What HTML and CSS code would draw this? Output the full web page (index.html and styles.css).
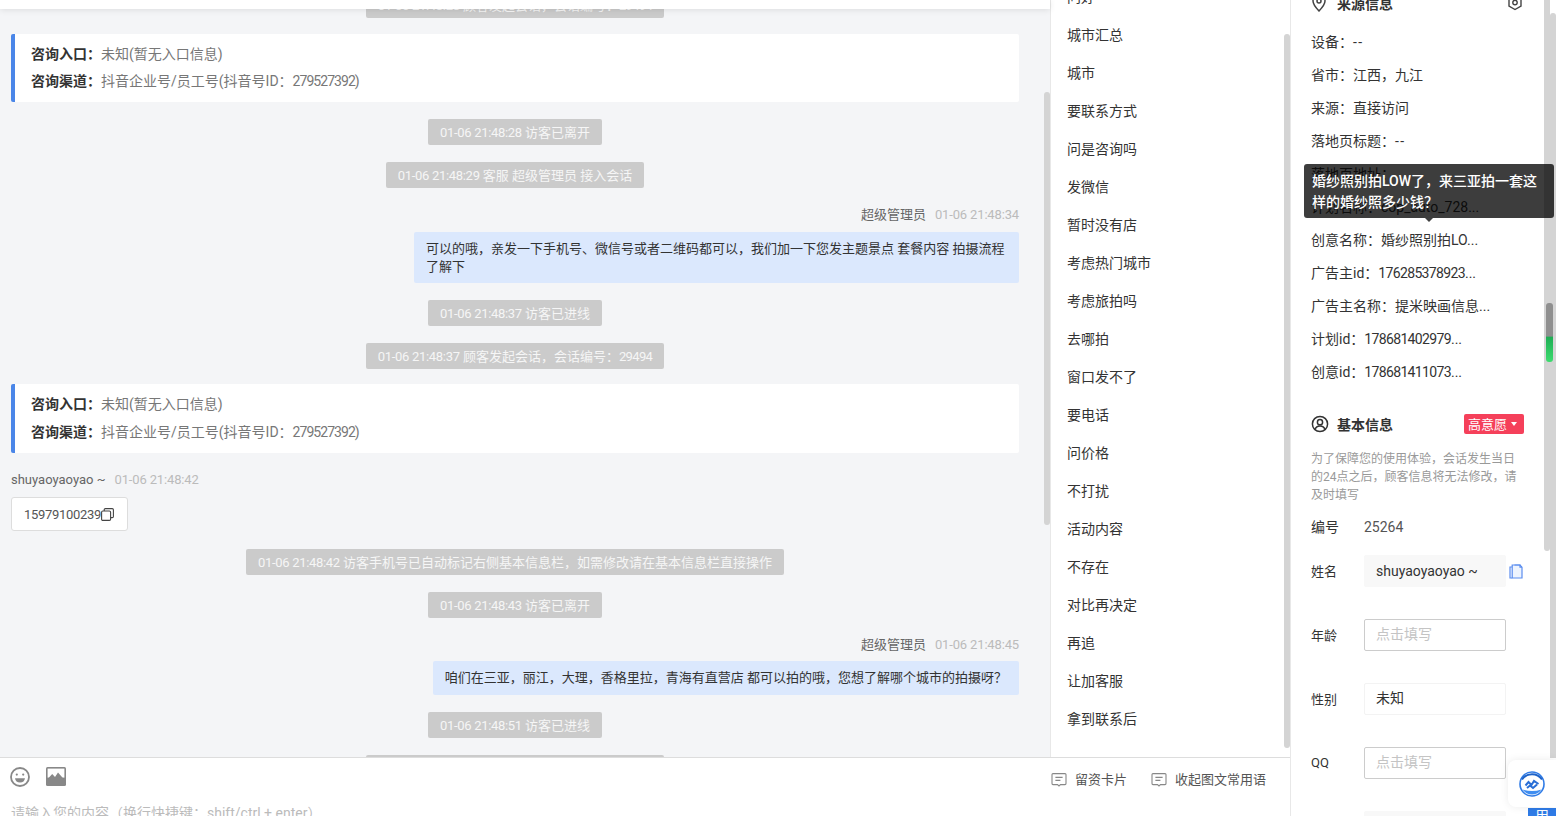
FILE: index.html
```html
<!DOCTYPE html>
<html lang="zh-CN">

<head>
  <meta charset="UTF-8" />
  <title>会话详情</title>
  <link rel="stylesheet" href="styles.css">
</head>

<body>
  <div class="main">
    <div class="top">
      <!-- chat column -->
      <div class="chat">
        <div class="chat-head"></div>
        <div class="chat-body">
          <div class="chat-list">
            <div class="pill"><span class="stamp">01-06 21:48:28</span> 顾客发起会话，会话编号：<span class="num">29494</span></div>
            <div class="entry">
              <p><b>咨询入口：</b>未知(暂无入口信息)</p>
              <p><b>咨询渠道：</b>抖音企业号/员工号(抖音号ID：<span class="num">279527392</span>)</p>
            </div>
            <div class="pill"><span class="stamp">01-06 21:48:28</span> 访客已离开</div>
            <div class="pill"><span class="stamp">01-06 21:48:29</span> 客服 超级管理员 接入会话</div>
            <div class="msg msg-right">
              <div class="msg-name">超级管理员<span class="msg-time">01-06 21:48:34</span></div>
              <div class="bubble">可以的哦，亲发一下手机号、微信号或者二维码都可以，我们加一下您发主题景点 套餐内容 拍摄流程了解下</div>
            </div>
            <div class="pill"><span class="stamp">01-06 21:48:37</span> 访客已进线</div>
            <div class="pill"><span class="stamp">01-06 21:48:37</span> 顾客发起会话，会话编号：<span class="num">29494</span></div>
            <div class="entry entry-tall">
              <p><b>咨询入口：</b>未知(暂无入口信息)</p>
              <p><b>咨询渠道：</b>抖音企业号/员工号(抖音号ID：<span class="num">279527392</span>)</p>
            </div>
            <div class="msg msg-phone">
              <div class="msg-name">shuyaoyaoyao ~<span class="msg-time">01-06 21:48:42</span></div>
              <div class="phone"><span class="stamp">15979100239</span>
                <svg class="phone-copy" width="13" height="13" viewBox="0 0 13 13" fill="none" stroke="#444" stroke-width="1.1">
                  <rect x="0.6" y="3" width="9" height="9.4" rx="1.2" />
                  <path d="M3.2 3V1.8q0-1.2 1.2-1.2h6.8q1.2 0 1.2 1.2v6.6q0 1.2-1.2 1.2H9.6" />
                </svg>
              </div>
            </div>
            <div class="pill"><span class="stamp">01-06 21:48:42</span> 访客手机号已自动标记右侧基本信息栏，如需修改请在基本信息栏直接操作</div>
            <div class="pill"><span class="stamp">01-06 21:48:43</span> 访客已离开</div>
            <div class="msg msg-right msg-tight">
              <div class="msg-name">超级管理员<span class="msg-time">01-06 21:48:45</span></div>
              <div class="bubble">咱们在三亚，丽江，大理，香格里拉，青海有直营店 都可以拍的哦，您想了解哪个城市的拍摄呀？</div>
            </div>
            <div class="pill"><span class="stamp">01-06 21:48:51</span> 访客已进线</div>
            <div class="pill"><span class="stamp">01-06 21:48:51</span> 顾客发起会话，会话编号：<span class="num">29495</span></div>
          </div>
          <div class="bar bar-chat"></div>
        </div>
      </div>

      <!-- common phrases -->
      <div class="phrases">
        <ul class="phrase-list">
          <li>问好</li>
          <li>城市汇总</li>
          <li>城市</li>
          <li>要联系方式</li>
          <li>问是咨询吗</li>
          <li>发微信</li>
          <li>暂时没有店</li>
          <li>考虑热门城市</li>
          <li>考虑旅拍吗</li>
          <li>去哪拍</li>
          <li>窗口发不了</li>
          <li>要电话</li>
          <li>问价格</li>
          <li>不打扰</li>
          <li>活动内容</li>
          <li>不存在</li>
          <li>对比再决定</li>
          <li>再追</li>
          <li>让加客服</li>
          <li>拿到联系后</li>
        </ul>
        <div class="bar bar-phrases"></div>
      </div>
    </div>

    <!-- input area -->
    <div class="composer">
      <div class="tools">
        <div class="tool-left">
          <svg width="20" height="20" viewBox="0 0 20 20" fill="none" stroke="#888" stroke-width="1.8">
            <circle cx="10" cy="10" r="9" />
            <circle cx="6.8" cy="7.6" r="1.1" fill="#888" stroke="none" />
            <circle cx="13.2" cy="7.6" r="1.1" fill="#888" stroke="none" />
            <path d="M5 11.2h10q-.6 4.2-5 4.2t-5-4.2z" fill="#888" stroke="none" />
          </svg>
          <svg width="20" height="20" viewBox="0 0 20 20">
            <rect x="0" y="0" width="20" height="19" rx="1.5" fill="#888" />
            <rect x="1.6" y="1.6" width="16.8" height="9" fill="#fff" />
            <path d="M1.6 12l4.6-5 2.800 3 3-4.600 6.400 7.400v3H1.600z" fill="#888" />
          </svg>
        </div>
        <div class="tool-right">
          <span class="tool-link">
            <svg width="16" height="16" viewBox="0 0 16 16" fill="none" stroke="#888" stroke-width="1.1">
              <path d="M2 1.600h12q1 0 1 1v9q0 1-1 1H9.500L8 14l-1.500-1.400H2q-1 0-1-1v-9q0-1 1-1z" />
              <path d="M4.400 5.400h7.200M4.400 8.400h5" />
            </svg>留资卡片</span>
          <span class="tool-link">
            <svg width="16" height="16" viewBox="0 0 16 16" fill="none" stroke="#888" stroke-width="1.1">
              <path d="M2 1.600h12q1 0 1 1v9q0 1-1 1H9.500L8 14l-1.500-1.400H2q-1 0-1-1v-9q0-1 1-1z" />
              <path d="M4.400 5.400h7.200M4.400 8.400h5" />
            </svg>收起图文常用语</span>
        </div>
      </div>
      <div class="placeholder">请输入您的内容（换行快捷键：shift/ctrl + enter）</div>
    </div>
  </div>

  <!-- right info panel -->
  <div class="info">
    <div class="info-inner">
      <div class="info-title">
        <span class="title-text">
          <svg class="pin" width="16" height="18" viewBox="0 0 16 18" fill="none" stroke="#444" stroke-width="1.5">
            <path d="M8 17C4 12.800 2 10 2 7a6 6 0 0 1 12 0c0 3-2 5.800-6 10z" />
            <circle cx="8" cy="7" r="2" />
          </svg>来源信息</span>
        <svg class="gear" width="16" height="18" viewBox="0 0 16 18" fill="none" stroke="#444" stroke-width="1.4">
          <path d="M8 1.500l6 3.500v7l-6 3.500-6-3.500v-7z" />
          <circle cx="8" cy="8.500" r="2.200" />
        </svg>
      </div>
      <div class="source">
        <div>设备：<span class="dash">--</span></div>
        <div>省市：江西，九江</div>
        <div>来源：直接访问</div>
        <div>落地页标题：<span class="dash">--</span></div>
        <div>落地页地址：</div>
        <div>计划名称：cop_auto_728...</div>
        <div>创意名称：婚纱照别拍LO...</div>
        <div>广告主id：<span class="num">176285378923</span>...</div>
        <div>广告主名称：提米映画信息...</div>
        <div>计划id：<span class="num">178681402979</span>...</div>
        <div>创意id：<span class="num">178681411073</span>...</div>
      </div>
      <div class="info-title info-title-basic">
        <span class="title-text">
          <svg width="18" height="18" viewBox="0 0 18 18" fill="none" stroke="#333" stroke-width="1.5">
            <circle cx="9" cy="9" r="7.600" />
            <circle cx="9" cy="7.200" r="2.600" />
            <path d="M4 14.500c.8-2.400 2.600-3.500 5-3.500s4.200 1.100 5 3.500" />
          </svg>基本信息</span>
        <span class="tag">高意愿<i class="tag-caret"></i></span>
      </div>
      <p class="note">为了保障您的使用体验，会话发生当日的24点之后，顾客信息将无法修改，请及时填写</p>
      <div class="serial"><span>编号</span><span>25264</span></div>
      <div class="field">
        <label>姓名</label>
        <div class="box box-fill">shuyaoyaoyao ~</div>
        <svg class="field-copy" width="14" height="15" viewBox="0 0 14 15" fill="none" stroke="#5b8def" stroke-width="1.2">
          <path d="M3.200 1H11l2 2.200V14H3.200z" fill="#eef4fe" />
          <path d="M3.200 3H1v11h2.200" />
          <path d="M5.500 1h5.500v2.200h2" />
        </svg>
      </div>
      <div class="field">
        <label>年龄</label>
        <div class="box box-input">点击填写</div>
      </div>
      <div class="field">
        <label>性别</label>
        <div class="box box-plain">未知</div>
      </div>
      <div class="field">
        <label>QQ</label>
        <div class="box box-input">点击填写</div>
      </div>
      <div class="field">
        <label>微信</label>
        <div class="box box-fill"></div>
      </div>
    </div>

    <div class="bar bar-info-a"></div>
    <div class="bar bar-info-b"></div>
    <div class="bar-green"></div>

    <div class="tip">婚纱照别拍LOW了，来三亚拍一套这样的婚纱照多少钱？</div>

    <div class="use-btn">用</div>
    <div class="float-logo">
      <svg width="26" height="26" viewBox="0 0 26 26">
        <circle cx="13" cy="13" r="12" fill="#fff" stroke="#2f7be6" stroke-width="1.6" />
        <path d="M3 8.500A12 12 0 0 1 23 8.500 12 12 0 0 0 3 8.500z" fill="#1d62c8" stroke="#1d62c8" stroke-width="2" />
        <path d="M3.500 18.500a11.500 11.500 0 0 0 19 0q-9.500 3-19 0z" fill="#3f8df0" />
        <path d="M6.500 14.500l3-3.500 3 3 2.500-4 4.500 3M8 17l3-2.500 3 2.500 4-3.500" fill="none" stroke="#2a6fd6" stroke-width="2" />
      </svg>
    </div>
  </div>
</body>

</html>
```

FILE: styles.css
```css
* {
  box-sizing: border-box;
}

body {
  margin: 0;
  width: 1556px;
  height: 816px;
  overflow: hidden;
  display: flex;
  background: #fff;
  color: #333;
  font-family: Roboto, "Noto Sans CJK SC", sans-serif;
  font-size: 13px;
}

p {
  margin: 0;
}

/* digits run narrower in the original, tighten them */
.num {
  letter-spacing: -0.65px;
}

.stamp {
  letter-spacing: -0.3px;
}

.dash {
  letter-spacing: 1.5px;
}

.main {
  width: 1290px;
  flex: none;
  display: flex;
  flex-direction: column;
}

.top {
  height: 758px;
  flex: none;
  display: flex;
  border-bottom: 1px solid #ddd;
}

/* chat */
.chat {
  width: 1050px;
  flex: none;
  display: flex;
  flex-direction: column;
  background: #f4f5f7;
}

.chat-head {
  height: 9px;
  flex: none;
  background: #fff;
  box-shadow: 0 1px 6px rgba(0, 0, 0, 0.1);
  position: relative;
  z-index: 1;
}

.chat-body {
  flex: 1;
  position: relative;
  overflow: hidden;
}

.chat-list {
  margin-top: -17px;
  padding: 0 31px 0 11px;
  display: flex;
  flex-direction: column;
  align-items: center;
}

.pill {
  height: 26px;
  line-height: 26px;
  padding: 1px 12px 0;
  margin-bottom: 17px;
  background: #cbcbcb;
  color: #f6f6f6;
  border-radius: 2px;
  white-space: nowrap;
}

.entry {
  align-self: stretch;
  height: 68px;
  margin: -1px 0 17px;
  padding: 7px 16px 0;
  background: #fff;
  border-left: 4px solid #4a86e8;
  border-radius: 2px;
  color: #777;
  font-size: 14px;
  line-height: 27px;
}

.entry-tall {
  height: 69px;
  margin-top: -2px;
  line-height: 27.500px;
}

.entry b {
  color: #333;
}

.entry .num {
  letter-spacing: -0.95px;
}

.msg {
  align-self: stretch;
  margin-top: 2px;
  margin-bottom: 17px;
}

.msg-right {
  display: flex;
  flex-direction: column;
  align-items: flex-end;
}

.msg-name {
  height: 16px;
  line-height: 16px;
  margin-bottom: 9px;
  color: #666;
}

.msg-tight .msg-name {
  margin-bottom: 8px;
}

.msg-time {
  margin-left: 9px;
  color: #bbb;
  letter-spacing: -0.15px;
}

.bubble {
  max-width: 605px;
  padding: 8px 12px 7px;
  background: #dbe8fd;
  border-radius: 2px;
  line-height: 18px;
}

.msg-tight .bubble {
  padding-bottom: 8px;
}

.msg-phone {
  margin-bottom: 18px;
}

.phone {
  display: inline-flex;
  align-items: center;
  width: 117px;
  height: 34px;
  padding: 0 12px;
  background: #fff;
  border: 1px solid #ddd;
  border-radius: 3px;
  color: #555;
}

.phone-copy {
  flex: none;
}

/* phrases */
.phrases {
  flex: 1;
  position: relative;
  overflow: hidden;
  border-left: 1px solid #e8e8e8;
  font-size: 14px;
}

.phrase-list {
  list-style: none;
  margin: -22px 0 0;
  padding: 0 0 0 16px;
}

.phrase-list li {
  height: 38px;
  line-height: 38px;
}

/* scrollbars */
.bar {
  position: absolute;
  width: 6px;
  background: #d4d4d4;
  border-radius: 3px;
}

.bar-chat {
  right: 0;
  top: 83px;
  height: 433px;
}

.bar-phrases {
  right: 0;
  top: 34px;
  height: 714px;
}

/* composer */
.composer {
  flex: 1;
  overflow: hidden;
  position: relative;
}

.tools {
  display: flex;
  justify-content: space-between;
  padding: 9px 24px 0 10px;
}

.tool-left {
  display: flex;
  gap: 16px;
}

.tool-right {
  display: flex;
  gap: 24px;
  padding-top: 4px;
  color: #555;
}

.tool-link {
  display: flex;
  align-items: center;
  gap: 8px;
  line-height: 18px;
}

.placeholder {
  margin: 15px 0 0 11px;
  color: #bbb;
  font-size: 14px;
  line-height: 18px;
}

/* right panel */
.info {
  flex: 1;
  position: relative;
  overflow: hidden;
  border-left: 1px solid #e8e8e8;
  font-size: 14px;
}

.info-inner {
  margin-top: -7px;
  padding: 0 32px 0 20px;
}

.info-title {
  display: flex;
  justify-content: space-between;
  align-items: center;
  height: 20px;
}

.info-title-basic {
  margin-top: 25px;
}

.title-text {
  display: flex;
  align-items: center;
  gap: 8px;
  padding-bottom: 1px;
  font-weight: 700;
  color: #333;
}

.pin {
  margin-right: 2px;
}

.gear {
  margin-right: 1px;
}

.source {
  margin-top: 13px;
  white-space: nowrap;
}

.source div {
  height: 33px;
  line-height: 33px;
}

.tag {
  display: flex;
  align-items: center;
  height: 20px;
  padding: 0 7px 1px 4px;
  gap: 4px;
  background: #f5405a;
  color: #fff;
  border-radius: 2px;
  font-size: 13px;
}

.tag-caret {
  width: 0;
  height: 0;
  border: 3.500px solid transparent;
  border-top: 4px solid #fff;
  border-bottom: 0;
}

.note {
  margin: 16px 0 13px;
  color: #999;
  font-size: 12px;
  line-height: 18px;
}

.serial {
  display: flex;
  height: 20px;
  line-height: 20px;
  margin-bottom: 18px;
}

.serial span:first-child,
.field label {
  width: 53px;
  flex: none;
}

.field label {
  font-size: 13px;
  padding-bottom: 2px;
}

.serial span:last-child {
  color: #555;
}

.field {
  display: flex;
  align-items: center;
  height: 32px;
  margin-bottom: 32px;
}

.box {
  width: 142px;
  height: 32px;
  line-height: 28px;
  padding: 0 11px;
  border: 1px solid transparent;
  border-radius: 2px;
}

.box-fill {
  background: #f8f8f8;
  border-color: #f8f8f8;
  line-height: 30px;
}

.box-input {
  border-color: #ccc;
  color: #c4c4c4;
}

.box-plain {
  border-color: #f3f3f3;
}

.field-copy {
  margin-left: 3px;
}

.bar-info-a {
  right: 6px;
  top: 0;
  height: 551px;
  border-radius: 0 0 3px 3px;
}

.bar-info-b {
  right: 0;
  top: 13px;
  height: 745px;
  border-radius: 3px 3px 0 0;
}

.bar-green {
  position: absolute;
  right: 3px;
  top: 303px;
  width: 7px;
  height: 59px;
  border-radius: 3px;
  background: linear-gradient(#8f8f8f 0, #8f8f8f 56%, #1fae55 58%, #3ddc6f 100%);
}

.tip {
  position: absolute;
  left: 13px;
  top: 164px;
  width: 250px;
  height: 54px;
  padding: 7px 8px 0;
  background: rgba(0, 0, 0, 0.76);
  color: #fff;
  border-radius: 3px;
  font-size: 14px;
  font-weight: 500;
  line-height: 21px;
}

.tip::after {
  content: "";
  position: absolute;
  left: 121px;
  top: 54px;
  border: 4px solid transparent;
  border-top-color: #3f3f3f;
  border-bottom: 0;
}

.float-logo {
  position: absolute;
  right: 0;
  top: 760px;
  width: 48px;
  height: 47px;
  padding: 11px 0 0 11px;
  background: #fff;
  border-radius: 8px 0 0 8px;
  box-shadow: 0 0 8px rgba(0, 0, 0, 0.08);
}

.use-btn {
  position: absolute;
  right: 0;
  top: 808px;
  width: 28px;
  height: 20px;
  background: #2f7be6;
  color: #fff;
  text-align: center;
  line-height: 16px;
}
```
